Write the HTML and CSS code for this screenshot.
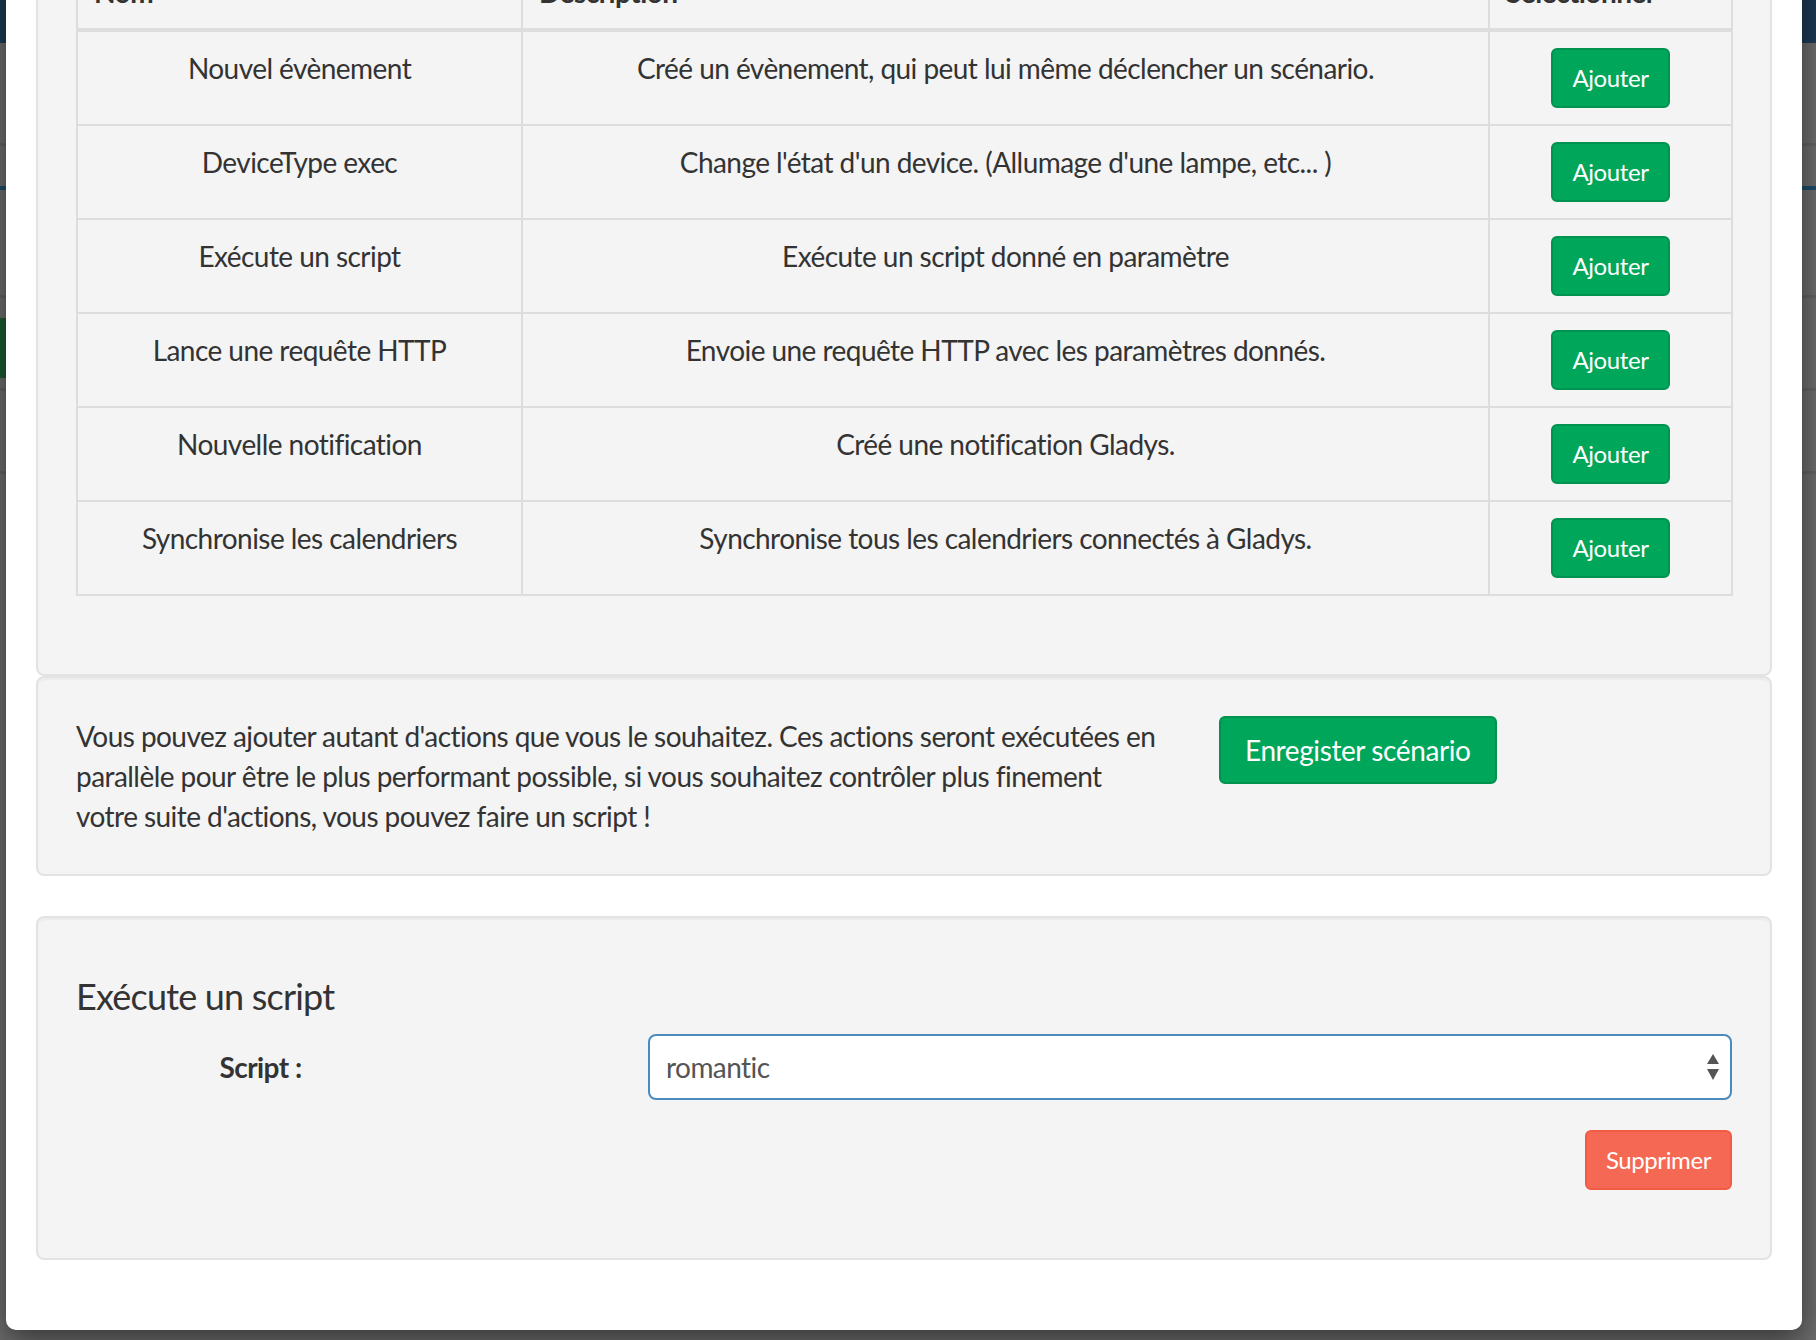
FILE: index.html
```html
<!DOCTYPE html>
<html lang="fr">
<head>
<meta charset="utf-8">
<title>Scénario</title>
<link rel="stylesheet" href="styles.css">
</head>
<body>
<div class="page">
  <div class="page-header"></div>
  <div class="page-section s1"></div>
  <div class="page-section s2"></div>
  <div class="page-section s3"></div>
  <div class="page-section s4"><div class="page-btn"></div></div>
  <div class="page-section s5"></div>
</div>

<div class="modal">
  <div class="modal-body">
    <div class="well well-first">
      <table class="actions">
        <colgroup><col class="c1"><col class="c2"><col class="c3"></colgroup>
        <thead>
          <tr><th>Nom</th><th>Description</th><th>Sélectionner</th></tr>
        </thead>
        <tbody>
          <tr><td>Nouvel évènement</td><td>Créé un évènement, qui peut lui même déclencher un scénario.</td><td><button class="btn btn-success btn-sm">Ajouter</button></td></tr>
          <tr><td>DeviceType exec</td><td>Change l'état d'un device. (Allumage d'une lampe, etc... )</td><td><button class="btn btn-success btn-sm">Ajouter</button></td></tr>
          <tr><td>Exécute un script</td><td>Exécute un script donné en paramètre</td><td><button class="btn btn-success btn-sm">Ajouter</button></td></tr>
          <tr><td>Lance une requête HTTP</td><td>Envoie une requête HTTP avec les paramètres donnés.</td><td><button class="btn btn-success btn-sm">Ajouter</button></td></tr>
          <tr><td>Nouvelle notification</td><td>Créé une notification Gladys.</td><td><button class="btn btn-success btn-sm">Ajouter</button></td></tr>
          <tr><td>Synchronise les calendriers</td><td>Synchronise tous les calendriers connectés à Gladys.</td><td><button class="btn btn-success btn-sm">Ajouter</button></td></tr>
        </tbody>
      </table>
    </div>

    <div class="well save-row">
      <p class="save-text">Vous pouvez ajouter autant d'actions que vous le souhaitez. Ces actions seront exécutées en parallèle pour être le plus performant possible, si vous souhaitez contrôler plus finement votre suite d'actions, vous pouvez faire un script !</p>
      <div class="save-action"><button class="btn btn-success btn-md">Enregister scénario</button></div>
    </div>

    <div class="well">
      <h4 class="action-title">Exécute un script</h4>
      <div class="form-row">
        <label class="form-label">Script :</label>
        <div class="select">
          <span class="select-value">romantic</span>
          <svg class="select-arrows" width="14" height="28" viewBox="0 0 14 28"><path d="M7 1 L13 11 L1 11 Z" fill="#555"/><path d="M1 16 L13 16 L7 27 Z" fill="#555"/></svg>
        </div>
      </div>
      <div class="form-actions">
        <button class="btn btn-danger btn-sm">Supprimer</button>
      </div>
    </div>
  </div>
</div>
</body>
</html>
```
FILE: styles.css
```css
html, body {
  margin: 0;
  padding: 0;
  height: 100%;
}
body {
  background: #6c6c6c;
  font-family: "Source Sans Pro", Lato, "Noto Sans", sans-serif;
  letter-spacing: -0.55px;
  color: #333;
  position: relative;
  overflow: hidden;
}

/* dimmed page behind the modal */
.page-header {
  height: 43px;
  background: #1d3a53;
}
.page-section {
  border-bottom: 3px solid #626262;
}
.s1 { height: 100px; }
.s2 { height: 40px; border-bottom: 4px solid #1f4b6b; }
.s3 { height: 105px; }
.s4 { height: 70px; padding-top: 20px; }
.page-btn {
  width: 60px;
  height: 60px;
  background: #1b5a34;
}
.s5 { height: 80px; }

/* modal */
.modal {
  position: absolute;
  left: 6px;
  top: -116px;
  width: 1796px;
  background: #fff;
  border-radius: 0 0 10px 10px;
  box-shadow: 0 10px 30px rgba(0, 0, 0, 0.5);
}
.modal-body {
  padding: 30px;
}

.well {
  background: #f4f4f4;
  border: 2px solid #e3e3e3;
  border-radius: 8px;
  padding: 38px;
  margin-bottom: 40px;
  box-shadow: inset 0 2px 2px rgba(0, 0, 0, 0.04);
}
.well-first {
  margin-bottom: 0;
}

/* table */
.actions {
  width: 100%;
  border-collapse: collapse;
  table-layout: fixed;
  margin-bottom: 40px;
  font-size: 28px;
  line-height: 40px;
}
.c1 { width: 445px; }
.c2 { width: 967px; }
.c3 { width: 243px; }
.actions th,
.actions td {
  border: 2px solid #dddddd;
  padding: 16px;
  vertical-align: top;
}
.actions th {
  text-align: left;
  font-weight: 700;
  border-bottom-width: 4px;
}
.actions td {
  text-align: center;
}

/* buttons */
.btn {
  display: inline-block;
  font-family: inherit;
  letter-spacing: -0.4px;
  color: #fff;
  border: 2px solid transparent;
  border-radius: 6px;
  cursor: pointer;
  margin: 0;
}
.btn-success {
  background: #00a65a;
  border-color: #00924f;
}
.btn-danger {
  background: #f56954;
  border-color: #f15a44;
}
.btn-sm {
  font-size: 24px;
  line-height: 36px;
  padding: 10px 19px;
}
.btn-md {
  font-size: 28px;
  line-height: 40px;
  padding: 12px 24px;
}

/* save row */
.save-row {
  display: flex;
  align-items: flex-start;
}
.save-text {
  width: 1083px;
  margin: 0;
  font-size: 28px;
  line-height: 40px;
}
.save-action {
  margin-left: 60px;
}

/* action form */
.action-title {
  margin: 20px 0 18px;
  font-size: 36px;
  line-height: 40px;
  font-weight: 400;
  letter-spacing: -0.8px;
}
.form-row {
  display: flex;
  align-items: center;
  margin-bottom: 30px;
}
.form-label {
  width: 369px;
  text-align: center;
  font-weight: 700;
  font-size: 28px;
  line-height: 40px;
}
.select {
  margin-left: 203px;
  flex: 1;
  height: 66px;
  box-sizing: border-box;
  border: 2px solid #4a8bbf;
  border-radius: 8px;
  background: #fff;
  display: flex;
  align-items: center;
  justify-content: space-between;
  padding: 0 10px 0 16px;
}
.select-value {
  font-size: 28px;
  color: #555;
}
.form-actions {
  display: flex;
  justify-content: flex-end;
  margin-bottom: 30px;
}
```
